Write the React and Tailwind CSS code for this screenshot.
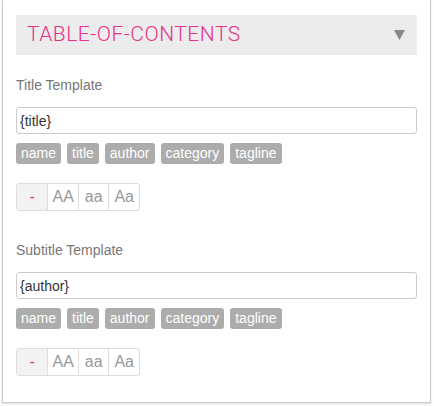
import React from 'react'

const tags = ['name', 'title', 'author', 'category', 'tagline']

function Template({ label, value }) {
  return (
    <div>
      <div className="text-[14px] leading-[16px] text-[#777]">{label}</div>
      <input
        readOnly
        value={value}
        className="mt-[14px] block w-full h-[27px] px-[3px] border border-[#ccc] rounded-[3px] font-['Liberation_Sans'] text-[14px] text-[#333] outline-none"
      />
      <div className="flex gap-[6px] mt-[9px]">
        {tags.map((t) => (
          <span key={t} className="h-[21px] px-[5px] flex items-center rounded-[3px] bg-[#acacac] text-white text-[14px]">
            {t}
          </span>
        ))}
      </div>
      <div className="flex mt-[19px] w-[124px] h-[28px] border border-[#ddd] rounded-[3px] overflow-hidden text-[16px] text-[#999]">
        <span className="w-[31px] flex items-center justify-center bg-[#f2f2f2] text-[#e5318a]">-</span>
        <span className="w-[31px] flex items-center justify-center border-l border-[#ddd]">AA</span>
        <span className="w-[31px] flex items-center justify-center border-l border-[#ddd]">aa</span>
        <span className="w-[31px] flex items-center justify-center border-l border-[#ddd]">Aa</span>
      </div>
    </div>
  )
}

export default function App() {
  return (
    <div className="w-[434px] h-[406px] bg-white font-['Liberation_Sans']">
      <div className="ml-[2px] w-[429px] h-[403px] border-x border-b border-[#ccc] shadow-[0_1px_2px_rgba(0,0,0,0.15)] px-[13px] pt-[15px]">
        <div className="h-[40px] bg-[#ececec] flex items-center justify-between pl-[11px] pr-[12px]">
          <span className="font-['Roboto'] font-light text-[21px] tracking-[0.5px] text-[#e5318a]">
            TABLE-OF-CONTENTS
          </span>
          <svg width="11" height="10" viewBox="0 0 11 10">
            <path d="M0 0h11L5.5 10z" fill="#888" />
          </svg>
        </div>
        <div className="mt-[22px]">
          <Template label="Title Template" value="{title}" />
        </div>
        <div className="mt-[31px]">
          <Template label="Subtitle Template" value="{author}" />
        </div>
      </div>
    </div>
  )
}
